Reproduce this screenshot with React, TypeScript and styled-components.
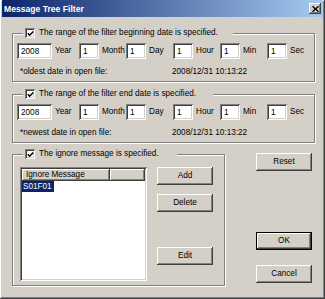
import { createGlobalStyle, styled } from "styled-components";

const GlobalStyle = createGlobalStyle`
  * {
    box-sizing: border-box;
  }
  html,
  body {
    margin: 0;
    padding: 0;
    background: #d4d0c8;
  }
  body {
    font-family: "Liberation Sans", Arial, sans-serif;
  }
`;

// classic 3D edges
const raised = `
  box-shadow: inset -1px -1px 0 #404040, inset 1px 1px 0 #ffffff,
    inset -2px -2px 0 #808080, inset 2px 2px 0 #d4d0c8;
`;
const sunken = `
  box-shadow: inset 1px 1px 0 #808080, inset -1px -1px 0 #ffffff,
    inset 2px 2px 0 #404040, inset -2px -2px 0 #d4d0c8;
`;

const units = ["Year", "Month", "Day", "Hour", "Min", "Sec"];

const DateGroup = ({ title, note, legendWidth, mt }: { title: string; note: string; legendWidth: number; mt: number }) => (
  <Group $mt={mt}>
    <Legend $w={legendWidth}>
      <CheckBox>
        <CheckMark />
      </CheckBox>
      <span>{title}</span>
    </Legend>
    <DateRow>
      {units.map((u, i) => (
        <UnitPair key={u}>
          <Field $w={i === 0 ? 35 : 20} defaultValue={i === 0 ? "2008" : "1"} readOnly />
          <Unit>{u}</Unit>
        </UnitPair>
      ))}
    </DateRow>
    <NoteRow>
      <NoteLabel>{note}</NoteLabel>
      <span>2008/12/31 10:13:22</span>
    </NoteRow>
  </Group>
);

const CheckMark = () => (
  <svg width="7" height="7" viewBox="0 0 7 7">
    <path d="M0.8 3.3 L2.6 5.2 L6.3 1.4" fill="none" stroke="#000" strokeWidth="1.5" />
  </svg>
);

const App = () => {
  return (
    <>
      <GlobalStyle />
      <Window>
        <TitleBar>
          <span>Message Tree Filter</span>
          <CloseButton>
            <svg width="7" height="6" viewBox="0 0 7 6">
              <path d="M0.5 0.3 L6.5 5.7 M6.5 0.3 L0.5 5.7" stroke="#000" strokeWidth="1.4" />
            </svg>
          </CloseButton>
        </TitleBar>
        <Body>
          <DateGroup
            mt={0}
            legendWidth={210}
            title="The range of the filter beginning date is specified."
            note="*oldest date in open file:"
          />
          <DateGroup
            mt={7}
            legendWidth={190}
            title="The range of the filter end date is specified."
            note="*newest date in open file:"
          />
          <BottomRow>
            <Group $width={213}>
              <Legend $w={154}>
                <CheckBox>
                  <CheckMark />
                </CheckBox>
                <span>The ignore message is specified.</span>
              </Legend>
              <IgnoreArea>
                <ListView>
                  <ListHeader>
                    <HeaderCell $w={88}>Ignore Message</HeaderCell>
                    <HeaderCell />
                  </ListHeader>
                  <ListItem>
                    <Selected>S01F01</Selected>
                  </ListItem>
                </ListView>
                <SideButtons>
                  <Button>Add</Button>
                  <Button $mt={9}>Delete</Button>
                  <Button $mt={35}>Edit</Button>
                </SideButtons>
              </IgnoreArea>
            </Group>
            <DialogButtons>
              <Button>Reset</Button>
              <Button $mt={61} $default>
                OK
              </Button>
              <Button $mt={15}>Cancel</Button>
            </DialogButtons>
          </BottomRow>
        </Body>
      </Window>
    </>
  );
};

export default App;

const Window = styled.div`
  width: 325px;
  height: 299px;
  display: flex;
  flex-direction: column;
  padding: 0 2px 2px;
  background: #d4d0c8;
  color: #000;
  font-size: 8.2px;
  line-height: 10px;
  overflow: hidden;
  ${raised}
`;

const TitleBar = styled.div`
  flex: none;
  height: 17px;
  display: flex;
  align-items: center;
  justify-content: space-between;
  padding: 0 2px 0 2px;
  background: linear-gradient(90deg, #0a246a, #a6caf0);
  color: #fff;
  font-size: 8.6px;
  font-weight: bold;
`;

const CloseButton = styled.span`
  width: 12px;
  height: 11px;
  display: flex;
  align-items: center;
  justify-content: center;
  background: #d4d0c8;
  ${raised}
`;

const Body = styled.div`
  display: flex;
  flex-direction: column;
  padding: 11px 8px 0 10px;
`;

const Group = styled.fieldset<{ $mt?: number; $width?: number }>`
  margin: ${(p) => p.$mt ?? 0}px 0 0 0;
  padding: 5px 4px 4px 4px;
  border: 1px solid #808080;
  box-shadow: inset 1px 1px 0 #fff, 1px 1px 0 #fff;
  min-width: 0;
  ${(p) => (p.$width ? `width: ${p.$width}px; flex: none;` : "")}
`;

const Legend = styled.legend<{ $w: number }>`
  width: ${(p) => p.$w}px;
  height: 10px;
  margin-left: 6px;
  padding: 0 0 0 2px;
  display: flex;
  align-items: center;
  gap: 4px;
  background: #d4d0c8;
  white-space: nowrap;
`;

const CheckBox = styled.span`
  flex: none;
  width: 10px;
  height: 10px;
  display: flex;
  align-items: center;
  justify-content: center;
  background: #fff;
  ${sunken}
`;

const DateRow = styled.div`
  display: flex;
  align-items: center;
`;

const UnitPair = styled.div`
  display: flex;
  align-items: center;
`;

const Field = styled.input<{ $w: number }>`
  width: ${(p) => p.$w}px;
  height: 16px;
  margin: 0;
  padding: 0 0 0 4px;
  border: none;
  outline: none;
  background: #fff;
  color: #000;
  font: inherit;
  ${sunken}
`;

const Unit = styled.span`
  width: 27px;
  padding-left: 3px;
`;

const NoteRow = styled.div`
  display: flex;
  align-items: center;
  height: 10px;
  margin-top: 8px;
  padding-left: 3px;
`;

const NoteLabel = styled.span`
  width: 152px;
`;

const BottomRow = styled.div`
  display: flex;
  align-items: flex-start;
  margin-top: 6px;
`;

const IgnoreArea = styled.div`
  display: flex;
  padding-top: 3px;
`;

const ListView = styled.div`
  width: 127px;
  height: 114px;
  margin: 0 0 0 3px;
  padding: 2px;
  display: flex;
  flex-direction: column;
  background: #fff;
  ${sunken}
`;

const ListHeader = styled.div`
  display: flex;
  height: 12px;
`;

const HeaderCell = styled.div<{ $w?: number }>`
  ${(p) => (p.$w ? `width: ${p.$w}px;` : "flex: 1;")}
  padding-left: 4px;
  line-height: 12px;
  background: #d4d0c8;
  ${raised}
`;

const ListItem = styled.div`
  display: flex;
  height: 11px;
  align-items: center;
`;

const Selected = styled.span`
  padding: 0 2px 0 1px;
  line-height: 11px;
  background: #0a246a;
  color: #fff;
`;

const SideButtons = styled.div`
  display: flex;
  flex-direction: column;
  margin-left: 10px;
`;

const DialogButtons = styled.div`
  display: flex;
  flex-direction: column;
  margin-left: 31px;
  padding-top: 4px;
`;

const Button = styled.button<{ $mt?: number; $default?: boolean }>`
  width: 56px;
  height: 18px;
  margin: ${(p) => p.$mt ?? 0}px 0 0 0;
  padding: 0;
  border: ${(p) => (p.$default ? "1px solid #000" : "none")};
  background: #d4d0c8;
  color: #000;
  font: inherit;
  ${raised}
`;
